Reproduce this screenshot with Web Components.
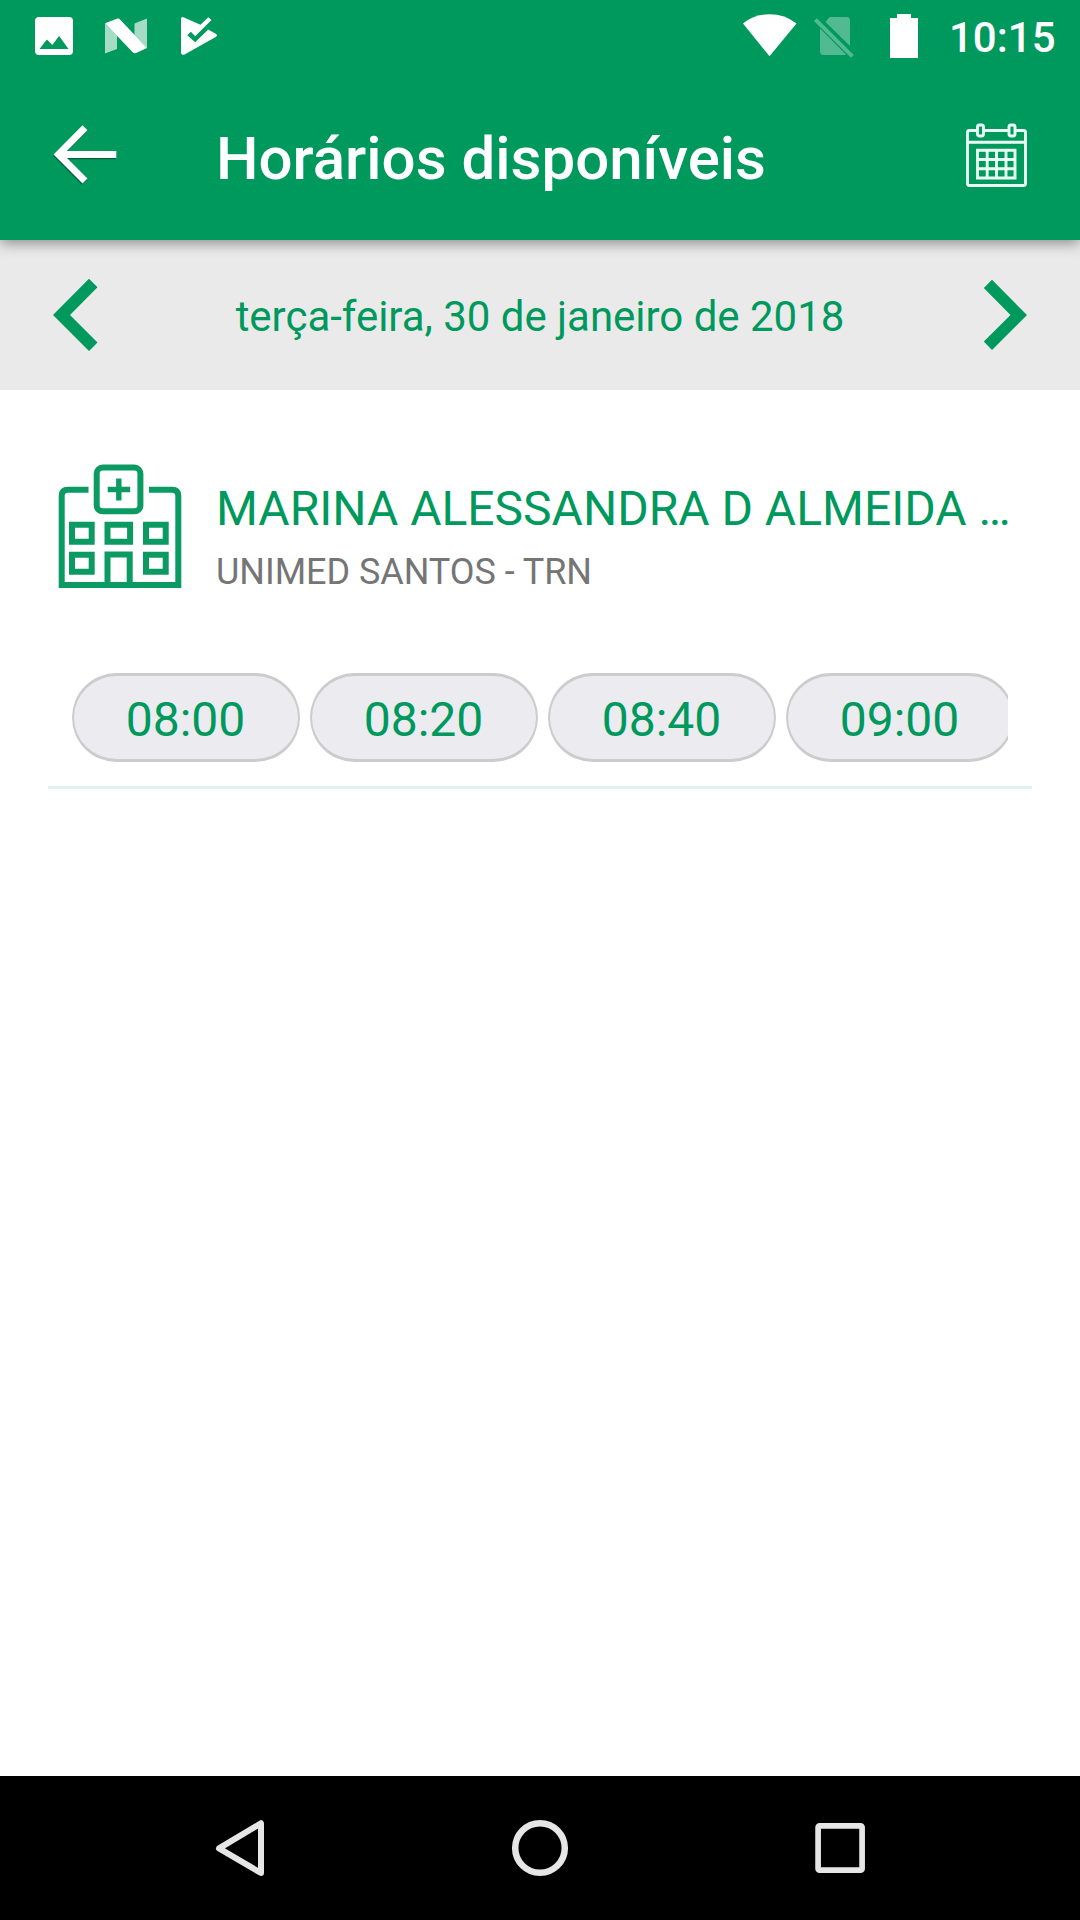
<!DOCTYPE html>
<html lang="pt-BR">
<head>
<meta charset="utf-8">
<title>Horários disponíveis</title>
<style>
html,body{margin:0;padding:0;background:#fff}
body{font-family:Roboto,"Noto Sans",sans-serif}
</style>
</head>
<body>
<schedule-app></schedule-app>
<script>
const define = (name, html) => {
  const t = document.createElement('template');
  t.innerHTML = html;
  customElements.define(name, class extends HTMLElement {
    constructor() {
      super();
      this.attachShadow({ mode: 'open' }).append(t.content.cloneNode(true));
    }
  });
};

// name: [viewBox, markup]; the viewBox size is the rendered size
const ICONS = {
  picture: ['35 17 38 38', '<path fill="#fff" fill-rule="evenodd" d="M39 17h30q4 0 4 4v30q0 4-4 4H39q-4 0-4-4V21q0-4 4-4zM39.500 49h29l-9.400-13-6.800 9-5.500-5.600z"/>'],
  nougat: ['105 18 42 36', '<path fill="#fff" opacity=".65" d="M105 23.500l12 12V49l-12 4.500zM134.500 23.500L147 18.500V48l-12.500-13z"/><path fill="#fff" d="M105 23.200L117.500 18.600Q119 18.300 120 19.500L147 48 135.500 53.200Q134 53.500 132.500 52z"/>'],
  play: ['181 17 36 38', '<path fill="#fff" d="M181 19q0-2.800 3-1.600L200.500 24.700 208.300 17.200 211.500 20 195.200 36.200 190.800 31.800 187.300 35.200 195.200 42.300 208.200 29.600 215.700 33.700q2.600 1.600 0 3.400L184.500 54.500q-3.500 1.200-3.500-2z"/>'],
  wifi: ['743 14 54 43', '<path fill="#fff" d="M743 23.500Q754 14.200 769.500 14.200T796.500 23.500L769.500 56.300z"/>'],
  sim: ['814 16 40 42', '<g opacity=".32" fill="#fff"><path d="M829.500 17H846.500q3.500 0 3.500 3.500V46L825.500 22z"/><path d="M820 28.500L846 54.500 844.500 55H823.500q-3.500 0-3.500-3.500z"/><path d="M814 21l2.800-2.800 37 36.800-2.800 2.800z"/></g>'],
  battery: ['890 14 28 44', '<path fill="#fff" d="M897 14h14v4h7v40h-28V18h7z"/>'],
  back: ['52 122 68 64', '<g fill="none" stroke-width="7"><path stroke="#004d2e" stroke-opacity=".75" transform="translate(-.6 1.300)" d="M116.300 154.500H60M85 127.800L58.500 154.500 85 181"/><path stroke="#fff" d="M116.300 154.500H60M85 127.800L58.500 154.500 85 181"/></g>'],
  calendar: ['966.500 123 62 65', '<g fill="none" stroke="#e9fff5" stroke-width="2.900"><path d="M977 130.500H970q-2 0-2 2V183.500q0 2 2 2h54q2 0 2-2V132.500q0-2-2-2h-8M984.500 130.500h24M968 142.300h58"/><rect x="978" y="125" width="6" height="11" rx="2"/><rect x="1009.500" y="125" width="6" height="11" rx="2"/><path d="M978 150.300h37.500V178H978zM978 159.500h37.500M978 168.800h37.500M987.700 150v28M997 150v28M1006.500 150v28"/></g>'],
  prev: ['53 278 45 74', '<path fill="#00995d" d="M89 278.700l8.500 8.500L70 315l27.500 27.500-8.500 8.500-36-36z"/>'],
  next: ['983 279 44 72', '<path fill="#00995d" d="M992 279.700l-8.200 8.300L1010.500 315l-26.700 26.500 8.200 8.500 35-35z"/>'],
  hospital: ['59 464 122 124', '<g fill="none" stroke="#0b9b62" stroke-width="6"><path d="M88.500 489.700H68q-6.300 0-6.300 6.300V585H178.300V496q0-6.300-6.300-6.300H149M107.500 585V554.500h22.200V585"/><rect x="96.700" y="467.500" width="43.700" height="43.800" rx="6"/><path stroke-width="5.400" d="M107.700 489.500h22.500M118.800 478.500v22"/><path d="M72 524.700h19.700v17H72zM107.500 524.700h22.600v17h-22.600zM146 524.700h19.700v17H146zM72 554.700h19.700v17H72zM146 554.700h19.700v17H146z"/></g>'],
  navback: ['214 1818 52 60', '<path fill="none" stroke="#e6e6e6" stroke-width="6" stroke-linejoin="round" d="M261 1823.200V1873L219 1848.400z"/>'],
  navhome: ['510 1818 60 60', '<circle cx="540" cy="1848" r="24.800" fill="none" stroke="#e6e6e6" stroke-width="6.500"/>'],
  navrecent: ['814 1821 52 54', '<rect x="818.100" y="1825.800" width="44" height="44.400" rx="1.500" fill="none" stroke="#e6e6e6" stroke-width="5.700"/>']
};
customElements.define('ui-icon', class extends HTMLElement {
  constructor() { super(); this.attachShadow({ mode: 'open' }); }
  connectedCallback() {
    const [box, body] = ICONS[this.getAttribute('name')];
    const [, , w, h] = box.split(' ');
    this.shadowRoot.innerHTML = `<style>:host{display:block;flex:none}svg{display:block;overflow:visible}</style><svg width="${w}" height="${h}" viewBox="${box}">${body}</svg>`;
  }
});

define('status-bar', `<style>
:host{display:flex;height:72px;box-sizing:border-box;padding:14px 24px 0 35px;background:#00995d;color:#fff;justify-content:space-between;position:relative;z-index:2}
div{display:flex;align-items:flex-start}
.l{gap:32px;padding-top:3px}.l :nth-child(2){margin-top:1px}.l :nth-child(3){margin-left:2px}
.sim{margin:2px 36px 0 17px}
time{font:500 42px/46px Roboto,sans-serif;margin:1px 0 0 31px;width:107px;white-space:nowrap}
</style><div class="l"><ui-icon name="picture"></ui-icon><ui-icon name="nougat"></ui-icon><ui-icon name="play"></ui-icon></div>
<div><ui-icon name="wifi"></ui-icon><ui-icon class="sim" name="sim"></ui-icon><ui-icon name="battery"></ui-icon><time>10:15</time></div>`);

define('app-bar', `<style>
:host{display:flex;align-items:flex-start;height:168px;box-sizing:border-box;padding:50px 52px 0;background:#00995d;color:#fff;position:relative;z-index:1;box-shadow:0 3px 13px rgba(0,0,0,.42)}
h1{font:500 60px/70px Roboto,sans-serif;margin:2px auto 0 96px;white-space:nowrap}
.cal{margin-top:1px}
</style><ui-icon name="back"></ui-icon><h1><slot></slot></h1><ui-icon class="cal" name="calendar"></ui-icon>`);

define('date-bar', `<style>
:host{display:flex;align-items:center;justify-content:space-between;height:150px;box-sizing:border-box;padding:0 53px;background:#eaeaea;color:#00995d}
span{font-size:42px;line-height:50px;white-space:nowrap;padding:4px 1px 0 0;letter-spacing:-.02px}
</style><ui-icon name="prev"></ui-icon><span><slot></slot></span><ui-icon name="next"></ui-icon>`);

define('time-chip', `<style>
:host{display:flex;flex:none;align-items:center;justify-content:center;width:228px;height:89px;box-sizing:border-box;border:solid #ccc;border-width:3px 2.500px;border-radius:45px;background:#ebebf0;color:#00995d;font-size:48px;line-height:56px;padding:4px 1px 0 0}
</style><slot></slot>`);

define('provider-card', `<style>
:host{display:block;margin:0 48px;border-bottom:3px solid #e3f1eb;height:396px;box-sizing:content-box}
.head{display:flex;height:198px;box-sizing:border-box;padding:74px 0 0 11px}
.txt{padding-left:35px;width:800px}
.name{color:#00995d;font-size:48px;line-height:56px;white-space:nowrap;margin-top:17px}
.place{color:#757575;font-size:36px;line-height:42px;white-space:nowrap;margin-top:14px;letter-spacing:-.05px}
.times{display:flex;gap:10px;margin:85px 24px 0;overflow:hidden}
</style><div class="head"><ui-icon name="hospital"></ui-icon><div class="txt"><div class="name"><slot name="name"></slot></div><div class="place"><slot name="place"></slot></div></div></div>
<div class="times"><slot></slot></div>`);

define('nav-bar', `<style>
:host{display:flex;align-items:center;justify-content:center;gap:244px;height:144px;background:#000}
</style><ui-icon name="navback"></ui-icon><ui-icon name="navhome"></ui-icon><ui-icon name="navrecent"></ui-icon>`);

define('schedule-app', `<style>
:host{display:flex;flex-direction:column;width:1080px;height:1920px;overflow:hidden;background:#fff}
main{flex:1}
</style><status-bar></status-bar><app-bar>Horários disponíveis</app-bar><date-bar>terça-feira, 30 de janeiro de 2018</date-bar>
<main><provider-card><span slot="name">MARINA ALESSANDRA D ALMEIDA …</span><span slot="place">UNIMED SANTOS - TRN</span>
<time-chip>08:00</time-chip><time-chip>08:20</time-chip><time-chip>08:40</time-chip><time-chip>09:00</time-chip></provider-card></main>
<nav-bar></nav-bar>`);
</script>
</body>
</html>
